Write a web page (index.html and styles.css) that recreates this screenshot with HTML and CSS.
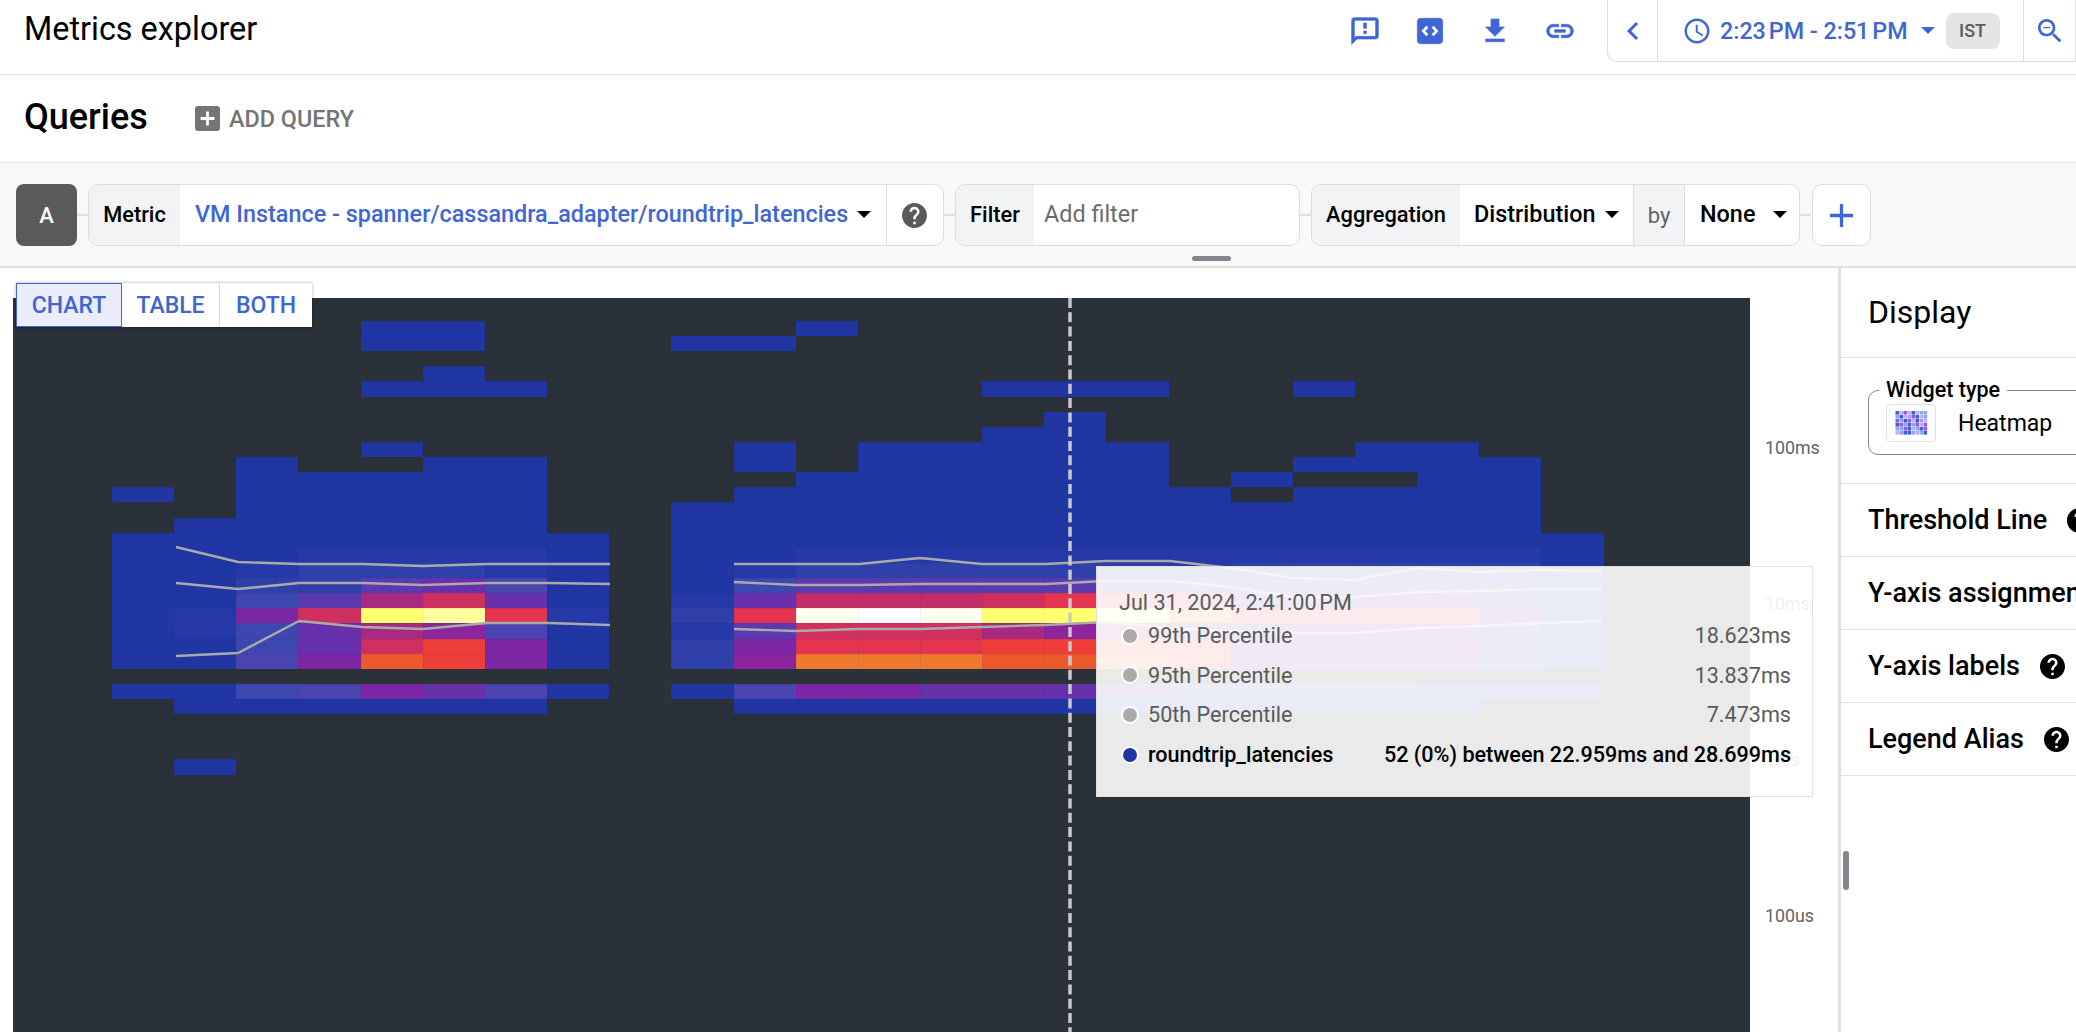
FILE: index.html
```html
<!DOCTYPE html>
<html lang="en">
<head>
  <meta charset="UTF-8" />
  <meta name="viewport" content="width=device-width, initial-scale=1.0"/>
  <title>Metrics explorer</title>
  <link rel="stylesheet" href="styles.css">
</head>
<body>

    <svg class="icon-defs" aria-hidden="true">
        <symbol id="icon-help" viewBox="2 2 20 20">
            <path d="M12 2C6.48 2 2 6.48 2 12s4.48 10 10 10 10-4.48 10-10S17.52 2 12 2zm1 17h-2v-2h2v2zm2.07-7.75-.9.92C13.45 12.9 13 13.5 13 15h-2v-.5c0-1.1.45-2.1 1.17-2.83l1.24-1.26c.37-.36.59-.86.59-1.41 0-1.1-.9-2-2-2s-2 .9-2 2H8c0-2.21 1.79-4 4-4s4 1.79 4 4c0 .88-.36 1.68-.93 2.25z"/>
        </symbol>
    </svg>

    <header class="topbar">
        <h1 class="page-title">Metrics explorer</h1>

        <div class="top-actions">
            <svg class="top-icon" viewBox="0 0 24 24"><path d="M20 2H4c-1.1 0-2 .9-2 2v18l4-4h14c1.1 0 2-.9 2-2V4c0-1.1-.9-2-2-2zm0 14H5.17L4 17.17V4h16v12zM11 12h2v2h-2zm0-6h2v4h-2z"/></svg>
            <svg class="top-icon" viewBox="0 0 24 24"><rect x="2.5" y="2.5" width="19" height="19" rx="2.5"/><path class="code-marks" d="M10 8.8 7 12l3 3.2M14 8.8l3 3.2-3 3.2"/></svg>
            <svg class="top-icon" viewBox="0 0 24 24"><path d="M19 9h-4V3H9v6H5l7 7 7-7zM5 18v2h14v-2H5z"/></svg>
            <svg class="top-icon" viewBox="0 0 24 24"><path d="M3.9 12c0-1.71 1.39-3.1 3.1-3.1h4V7H7c-2.76 0-5 2.24-5 5s2.24 5 5 5h4v-1.9H7c-1.71 0-3.1-1.39-3.1-3.1zM8 13h8v-2H8v2zm9-6h-4v1.9h4c1.71 0 3.1 1.39 3.1 3.1s-1.39 3.1-3.1 3.1h-4V17h4c2.76 0 5-2.24 5-5s-2.24-5-5-5z"/></svg>
        </div>

        <div class="time-box">
            <div class="time-back">
                <svg class="time-icon" viewBox="0 0 24 24"><path d="M15.41 7.41 14 6l-6 6 6 6 1.41-1.41L10.83 12z"/></svg>
            </div>
            <div class="time-range">
                <svg class="clock-icon" viewBox="0 0 24 24"><path d="M11.99 2C6.47 2 2 6.48 2 12s4.47 10 9.99 10C17.52 22 22 17.52 22 12S17.52 2 11.99 2zM12 20c-4.42 0-8-3.58-8-8s3.58-8 8-8 8 3.58 8 8-3.58 8-8 8zm.5-13H11v6l5.25 3.15.75-1.23-4.5-2.67z"/></svg>
                <span class="time-text">2:23&#8239;PM - 2:51&#8239;PM</span>
                <span class="caret caret-blue"></span>
                <span class="zone-pill">IST</span>
            </div>
            <div class="time-zoom">
                <svg class="search-icon" viewBox="0 0 24 24"><path d="M15.5 14h-.79l-.28-.27C15.41 12.59 16 11.11 16 9.5 16 5.91 13.09 3 9.5 3S3 5.91 3 9.5 5.91 16 9.5 16c1.61 0 3.09-.59 4.23-1.57l.27.28v.79l5 4.99L20.49 19l-4.99-5zm-6 0C7.01 14 5 11.99 5 9.5S7.01 5 9.5 5 14 7.01 14 9.5 11.99 14 9.5 14zM7 9h5v1H7z"/></svg>
            </div>
        </div>
    </header>

    <section class="queries-head">
        <h2 class="queries-title">Queries</h2>
        <div class="add-query">
            <svg class="add-icon" viewBox="3 3 18 18"><path d="M19 3H5c-1.1 0-2 .9-2 2v14c0 1.1.9 2 2 2h14c1.1 0 2-.9 2-2V5c0-1.1-.9-2-2-2zm-2 10h-4v4h-2v-4H7v-2h4V7h2v4h4v2z"/></svg>
            <span>ADD QUERY</span>
        </div>
    </section>

    <section class="query-bar">
        <div class="query-chip">A</div>
        <span class="joiner"></span>

        <div class="group group-metric">
            <span class="group-label label-metric">Metric</span>
            <span class="group-value value-metric">
                <span class="metric-name">VM Instance - spanner/cassandra_adapter/roundtrip_latencies</span>
                <span class="caret"></span>
            </span>
            <span class="group-help">
                <svg class="help-icon help-grey"><use href="#icon-help"/></svg>
            </span>
        </div>
        <span class="joiner"></span>

        <div class="group group-filter">
            <span class="group-label label-filter">Filter</span>
            <span class="filter-hint">Add filter</span>
        </div>
        <span class="joiner"></span>

        <div class="group group-aggregation">
            <span class="group-label label-aggregation">Aggregation</span>
            <span class="group-value value-distribution">Distribution <span class="caret"></span></span>
            <span class="group-by">by</span>
            <span class="group-value value-none">None <span class="caret"></span></span>
        </div>
        <span class="joiner"></span>

        <div class="add-clause">
            <svg class="plus-icon" viewBox="5 5 14 14"><path d="M19 13h-6v6h-2v-6H5v-2h6V5h2v6h6v2z"/></svg>
        </div>

        <span class="drag-handle"></span>
    </section>

    <main class="workspace">
        <div class="chart-area">
            <svg class="heatmap" viewBox="13 298 1737 734">
                <g id="cells"></g>

                <!-- 99th, 95th, 50th percentile, first run of data -->
                <polyline class="pct-line" points="176,547 238,562 299,564 362,564 423,566 487,564 548,564 610,564"/>
                <polyline class="pct-line" points="176,583 238,589 299,583 362,583 423,585 487,583 548,583 610,584"/>
                <polyline class="pct-line" points="176,656 238,653 299,621 362,627 423,629 487,623 548,623 610,625"/>

                <!-- same three, second run -->
                <polyline class="pct-line" points="734,564 796,564 859,564 920,558 982,564 1045,564 1106,561 1170,561 1231,568 1292,578 1355,580 1418,568 1479,572 1542,570 1602,571"/>
                <polyline class="pct-line" points="734,582 796,585 859,585 920,584 982,584 1045,584 1106,581 1170,581 1231,587 1292,597 1355,597 1418,592 1479,591 1542,589 1602,589"/>
                <polyline class="pct-line" points="734,629 796,631 859,629 920,629 982,627 1045,625 1106,622 1170,628 1231,631 1292,633 1355,633 1418,628 1479,626 1542,623 1602,621"/>

                <line class="crosshair" x1="1070" y1="298" x2="1070" y2="1032"/>
            </svg>

            <div class="y-axis">
                <span>100ms</span>
                <span>10ms</span>
                <span>1ms</span>
                <span>100us</span>
            </div>

            <div class="view-tabs">
                <span class="view-tab view-tab-active">CHART</span>
                <span class="view-tab">TABLE</span>
                <span class="view-tab">BOTH</span>
            </div>

            <div class="chart-tooltip">
                <div class="tooltip-date">Jul 31, 2024, 2:41:00&#8239;PM</div>
                <div class="tooltip-row">
                    <span class="tooltip-dot"></span>
                    <span class="tooltip-name">99th Percentile</span>
                    <span>18.623ms</span>
                </div>
                <div class="tooltip-row">
                    <span class="tooltip-dot"></span>
                    <span class="tooltip-name">95th Percentile</span>
                    <span>13.837ms</span>
                </div>
                <div class="tooltip-row">
                    <span class="tooltip-dot"></span>
                    <span class="tooltip-name">50th Percentile</span>
                    <span>7.473ms</span>
                </div>
                <div class="tooltip-row tooltip-row-current">
                    <span class="tooltip-dot tooltip-dot-blue"></span>
                    <span class="tooltip-name">roundtrip_latencies</span>
                    <span>52 (0%) between 22.959ms and 28.699ms</span>
                </div>
            </div>
        </div>

        <aside class="display-panel">
            <h3 class="panel-title">Display</h3>

            <div class="panel-widget">
                <fieldset class="widget-field">
                    <legend>Widget type</legend>
                    <div class="widget-value">
                        <span class="widget-thumb"><svg id="widgetThumb" viewBox="0 0 48 36"></svg></span>
                        <span>Heatmap</span>
                    </div>
                </fieldset>
            </div>

            <div class="panel-row"><span>Threshold Line</span><svg class="help-icon"><use href="#icon-help"/></svg></div>
            <div class="panel-row"><span>Y-axis assignment</span></div>
            <div class="panel-row"><span>Y-axis labels</span><svg class="help-icon"><use href="#icon-help"/></svg></div>
            <div class="panel-row"><span>Legend Alias</span><svg class="help-icon"><use href="#icon-help"/></svg></div>

            <span class="panel-scroll"></span>
        </aside>
    </main>

    <script src="heatmap.js"></script>
</body>
</html>
```

FILE: styles.css
```css
* {
  box-sizing: border-box;
}

body {
  margin: 0;
  width: 2076px;
  height: 1032px;
  overflow: hidden;
  font-family: Roboto, "Liberation Sans", sans-serif;
  background: #fff;
  color: #000;
}

.icon-defs {
  display: none;
}

/* top bar */
.topbar {
  display: flex;
  align-items: flex-start;
  height: 75px;
  padding-left: 24px;
  border-bottom: 1px solid #e0e0e0;
}

.page-title {
  margin: 9px 0 0;
  flex: 1;
  font-size: 32.4px;
  line-height: 40px;
  font-weight: 400;
}

.top-actions {
  display: flex;
  gap: 33px;
  margin: 15px 31px 0 0;
}

.top-icon {
  width: 32px;
  height: 32px;
  fill: #3f66d4;
  stroke: #3f66d4;
  stroke-width: 0.5;
}

.code-marks {
  fill: none;
  stroke: #fff;
  stroke-width: 2;
}

.time-box {
  display: flex;
  width: 469px;
  height: 62px;
  border: 1px solid #dadce0;
  border-top: none;
  border-radius: 0 0 0 10px;
}

.time-back {
  display: flex;
  align-items: center;
  justify-content: center;
  width: 50px;
  border-right: 1px solid #dadce0;
}

.time-icon {
  width: 36px;
  height: 36px;
  fill: #3f66d4;
}

.time-range {
  display: flex;
  align-items: center;
  width: 366px;
  padding-left: 24px;
  border-right: 1px solid #dadce0;
}

.clock-icon {
  width: 30px;
  height: 30px;
  fill: #3f66d4;
}

.time-text {
  margin-left: 8px;
  font-size: 23.3px;
  font-weight: 500;
  color: #3f66d4;
  white-space: nowrap;
}

.caret {
  display: inline-block;
  width: 0;
  height: 0;
  border-left: 7px solid transparent;
  border-right: 7px solid transparent;
  border-top: 7px solid #000;
}

.caret-blue {
  margin-left: 13px;
  border-top-color: #3f66d4;
}

.zone-pill {
  display: flex;
  align-items: center;
  justify-content: center;
  width: 54px;
  height: 36px;
  margin-left: 11px;
  border-radius: 8px;
  background: #e4e4e4;
  color: #5a5a5a;
  font-size: 18px;
  font-weight: 500;
}

.time-zoom {
  display: flex;
  align-items: center;
  justify-content: center;
  width: 51px;
}

.search-icon {
  width: 32px;
  height: 32px;
  fill: #3f66d4;
}

/* queries title row */
.queries-head {
  display: flex;
  align-items: center;
  height: 88px;
  padding-left: 24px;
  border-bottom: 1px solid #e0e0e0;
}

.queries-title {
  margin: 0 0 3px;
  width: 171px;
  font-size: 36px;
  font-weight: 500;
}

.add-query {
  display: flex;
  align-items: center;
  gap: 9px;
  color: #757575;
  font-size: 23.4px;
  font-weight: 500;
}

.add-icon {
  width: 25px;
  height: 25px;
  fill: #757575;
}

/* query builder row */
.query-bar {
  position: relative;
  display: flex;
  align-items: flex-start;
  height: 105px;
  padding: 21px 0 0 16px;
  background: #f9f9f9;
  border-bottom: 2px solid #e0e0e0;
  font-size: 23.4px;
}

.query-chip {
  display: flex;
  align-items: center;
  justify-content: center;
  width: 61px;
  height: 62px;
  border-radius: 8px;
  background: #5a5a5a;
  color: #fff;
  font-size: 22px;
  font-weight: 500;
}

.joiner {
  width: 11px;
  height: 2px;
  margin-top: 30px;
  background: #e0e0e0;
}

.group {
  display: flex;
  height: 62px;
  border: 1px solid #dadce0;
  border-radius: 10px;
  background: #fff;
  overflow: hidden;
}

.group-metric {
  width: 856px;
}

.group-filter {
  width: 345px;
}

.group-aggregation {
  width: 489px;
}

.group-label {
  display: flex;
  align-items: center;
  justify-content: center;
  padding-bottom: 1px;
  background: #f1f3f4;
  font-weight: 500;
  font-size: 21.8px;
}

.label-metric {
  width: 91px;
}

.label-filter {
  width: 78px;
}

.label-aggregation {
  width: 148px;
}

.group-value {
  display: flex;
  align-items: center;
  padding-bottom: 2px;
  font-weight: 500;
}

.value-metric {
  width: 706px;
  padding-left: 15px;
  gap: 9px;
}

.metric-name {
  color: #3f66d4;
  white-space: nowrap;
}

.group-help {
  display: flex;
  align-items: center;
  justify-content: center;
  flex: 1;
  padding-right: 2px;
  border-left: 1px solid #dadce0;
}

.help-icon {
  width: 25px;
  height: 25px;
  fill: #000;
}

.help-grey {
  fill: #5a5a5a;
}

.filter-hint {
  display: flex;
  align-items: center;
  padding: 0 0 2px 10px;
  color: #6b6b6b;
}

.value-distribution {
  width: 173px;
  padding-left: 14px;
  gap: 9px;
}

.group-by {
  display: flex;
  align-items: center;
  justify-content: center;
  width: 52px;
  background: #f1f3f4;
  border-left: 1px solid #dadce0;
  border-right: 1px solid #dadce0;
  font-size: 22px;
  color: #5f6368;
}

.value-none {
  flex: 1;
  padding-left: 15px;
  gap: 18px;
}

.add-clause {
  display: flex;
  align-items: center;
  justify-content: center;
  width: 59px;
  height: 62px;
  margin-left: 1px;
  border: 1px solid #dadce0;
  border-radius: 10px;
  background: #fff;
}

.plus-icon {
  width: 23px;
  height: 23px;
  fill: #3f66d4;
}

.drag-handle {
  position: absolute;
  left: 1192px;
  top: 93px;
  width: 39px;
  height: 5px;
  border-radius: 3px;
  background: #80868b;
}

/* chart + side panel */
.workspace {
  display: flex;
  height: 764px;
}

.chart-area {
  position: relative;
  display: flex;
  width: 1838px;
  padding: 30px 0 0 13px;
}

.heatmap {
  display: block;
  flex: none;
  width: 1737px;
  height: 734px;
  background: #2a3138;
}

.cell {
  stroke: rgba(20, 24, 60, 0.06);
  stroke-width: 1;
  shape-rendering: crispEdges;
}

.pct-line {
  fill: none;
  stroke: #aaaaaa;
  stroke-width: 2.4;
}

.crosshair {
  stroke: #c9c9c9;
  stroke-width: 3.5;
  stroke-dasharray: 10 4.3;
}

.y-axis {
  display: flex;
  flex-direction: column;
  padding: 72px 0 0 15px;
  color: #5f6368;
  font-size: 17.8px;
}

.y-axis span {
  height: 156px;
  line-height: 156px;
}

.view-tabs {
  position: absolute;
  left: 16px;
  top: 14px;
  display: flex;
  height: 45px;
  border-top: 1px solid #dadce0;
  background: #fff;
  box-shadow: 0 1px 3px rgba(0, 0, 0, 0.3);
  font-size: 23px;
  font-weight: 500;
  color: #3f66d4;
}

.view-tab {
  display: flex;
  align-items: center;
  justify-content: center;
  width: 98px;
  border-right: 1px solid #dadce0;
}

.view-tab:last-child {
  width: 92px;
  border-right: none;
}

.view-tab-active {
  width: 106px;
  background: #ebeefa;
  border: 1px solid #3f66d4;
}

.chart-tooltip {
  position: absolute;
  left: 1096px;
  top: 298px;
  width: 717px;
  height: 231px;
  padding-top: 22px;
  background: rgba(255, 255, 255, 0.9);
  border: 1px solid #e0e0e0;
  font-size: 21.6px;
  color: #5a5a5a;
}

.tooltip-date {
  padding-left: 22px;
  line-height: 27px;
}

.tooltip-row {
  display: flex;
  align-items: center;
  height: 39.6px;
  padding: 0 21px 0 24px;
}

.tooltip-row-current {
  color: #000;
  font-weight: 500;
}

.tooltip-dot {
  width: 18px;
  height: 18px;
  border: 2px solid #fff;
  border-radius: 50%;
  background: #aaaaaa;
}

.tooltip-dot-blue {
  background: #1f36a3;
}

.tooltip-name {
  flex: 1;
  margin-left: 9px;
}

/* side panel */
.display-panel {
  position: relative;
  flex: 1;
  border-left: 3px solid #e0e0e0;
  overflow: hidden;
}

.panel-title {
  margin: 0;
  height: 90px;
  padding-left: 27px;
  border-bottom: 1px solid #e0e0e0;
  font-size: 32px;
  line-height: 88px;
  font-weight: 400;
}

.panel-widget {
  height: 126px;
  padding: 20px 0 0 27px;
  border-bottom: 1px solid #e0e0e0;
}

.widget-field {
  width: 320px;
  height: 77px;
  margin: 0;
  padding: 0 0 0 17px;
  border: 1px solid #80868b;
  border-radius: 10px;
}

.widget-field legend {
  margin-left: -7px;
  padding: 0 7px;
  font-size: 21.5px;
  line-height: 24px;
  font-weight: 500;
}

.widget-value {
  display: flex;
  align-items: center;
  gap: 22px;
  margin-top: 2px;
  font-size: 23px;
}

.widget-thumb {
  display: flex;
  align-items: center;
  justify-content: center;
  width: 50px;
  height: 38px;
  border: 1px solid #e0e0e0;
  border-radius: 4px;
}

.widget-thumb svg {
  width: 37px;
  height: 24px;
}

.panel-row {
  display: flex;
  align-items: center;
  gap: 20px;
  height: 73px;
  padding-left: 27px;
  border-bottom: 1px solid #e0e0e0;
  font-size: 27px;
  font-weight: 500;
  white-space: nowrap;
}

.panel-row .help-icon {
  flex: none;
}

.panel-scroll {
  position: absolute;
  left: 2px;
  top: 583px;
  width: 6px;
  height: 39px;
  border-radius: 3px;
  background: #80868b;
}
```

FILE: heatmap.js
```js
// Heat colours, coolest to hottest
const HEAT = {
    a: "#1f36a3", b: "#2539a8", c: "#2f40ab", d: "#3c47af", e: "#4a45b0",
    f: "#5a3aae", g: "#6830aa", h: "#7d26a4", i: "#8c24a0", j: "#a82a80",
    k: "#c22e68", l: "#d03060", m: "#e5344f", n: "#ed3e3a", o: "#ec5a2c",
    p: "#ee7a2e", q: "#ffff70", r: "#ffffa0", s: "#fffff0", t: "#ffffff"
};

const CELL_W = 62.15;
const CELL_H = 15.12;
const LEFT = 112;
const TOP = 321;

// One entry per time bucket.
// sparse = rows (from the top) with low counts, dense = rows 14 to 22,
// low = row 24, tail = row 25 present
const BUCKETS = [
    { sparse: [11], dense: "aaaaaaaaa", low: "a" },
    { sparse: [13, 29], dense: "aaaaabbaa", low: "a", tail: true },
    { sparse: [9, 10, 11, 12, 13], dense: "aabcdhdde", low: "d", tail: true },
    { sparse: [10, 11, 12, 13], dense: "abccflggh", low: "e", tail: true },
    { sparse: [0, 1, 4, 8, 10, 11, 12, 13], dense: "abcfjqjlo", low: "h", tail: true },
    { sparse: [0, 1, 3, 4, 9, 10, 11, 12, 13], dense: "abcglrinn", low: "g", tail: true },
    { sparse: [4, 9, 10, 11, 12, 13], dense: "abbegmehh", low: "e", tail: true },
    { sparse: [], dense: "aaaaabaaa", low: "a" },
    null,
    { sparse: [1, 12, 13], dense: "aaaabcbcc", low: "a" },
    { sparse: [1, 8, 9, 11, 12, 13], dense: "aabdgmfhi", low: "e", tail: true },
    { sparse: [0, 10, 11, 12, 13], dense: "abcfkslmp", low: "h", tail: true },
    { sparse: [8, 9, 10, 11, 12, 13], dense: "abcfktlmp", low: "h", tail: true },
    { sparse: [8, 9, 10, 11, 12, 13], dense: "abcfkslmp", low: "g", tail: true },
    { sparse: [4, 7, 8, 9, 10, 11, 12, 13], dense: "abcflqjno", low: "g", tail: true },
    { sparse: [4, 6, 7, 8, 9, 10, 11, 12, 13], dense: "abcfmqino", low: "g", tail: true },
    { sparse: [4, 8, 9, 10, 11, 12, 13], dense: "abcfmrjno", low: "g", tail: true },
    { sparse: [11, 12, 13], dense: "abbelpgmn", low: "e", tail: true },
    { sparse: [10, 12, 13], dense: "abcdgmghh", low: "d", tail: true },
    { sparse: [4, 9, 11, 12, 13], dense: "abcdgmghh", low: "d", tail: true },
    { sparse: [8, 9, 11, 12, 13], dense: "abcdgmghh", low: "d", tail: true },
    { sparse: [8, 9, 10, 11, 12, 13], dense: "abcdgmghh", low: "c", tail: true },
    { sparse: [9, 10, 11, 12, 13], dense: "abcdegdee", low: "b" },
    { sparse: [], dense: "aaaaaaaaa", low: "a" }
];

const SVG_NS = "http://www.w3.org/2000/svg";
const cells = document.getElementById("cells");

function addCell(col, row, colour) {
    const x = Math.round(LEFT + col * CELL_W);
    const y = Math.round(TOP + row * CELL_H);
    const rect = document.createElementNS(SVG_NS, "rect");
    rect.setAttribute("class", "cell");
    rect.setAttribute("x", x);
    rect.setAttribute("y", y);
    rect.setAttribute("width", Math.round(LEFT + (col + 1) * CELL_W) - x);
    rect.setAttribute("height", Math.round(TOP + (row + 1) * CELL_H) - y);
    rect.setAttribute("fill", colour);
    cells.appendChild(rect);
}

BUCKETS.forEach((bucket, col) => {
    if (!bucket) return;
    bucket.sparse.forEach(row => addCell(col, row, HEAT.a));
    bucket.dense.split("").forEach((key, i) => addCell(col, 14 + i, HEAT[key]));
    addCell(col, 24, HEAT[bucket.low]);
    if (bucket.tail) addCell(col, 25, HEAT.a);
});

// Little preview in the widget type picker
const THUMB_COLOURS = { d: "#3f5ec8", p: "#9a55e8", l: "#c8a8f0", b: "#8aa8f0" };
const THUMB = ["dlpldlbb", "bdlbpdlb", "pbdpldbl", "dpbdbplp", "bbpdlbdp", "lbddblbd"];
const thumb = document.getElementById("widgetThumb");

THUMB.forEach((line, y) => {
    line.split("").forEach((key, x) => {
        const rect = document.createElementNS(SVG_NS, "rect");
        rect.setAttribute("x", x * 6);
        rect.setAttribute("y", y * 6);
        rect.setAttribute("width", 5.4);
        rect.setAttribute("height", 5.4);
        rect.setAttribute("fill", THUMB_COLOURS[key]);
        thumb.appendChild(rect);
    });
});
```
